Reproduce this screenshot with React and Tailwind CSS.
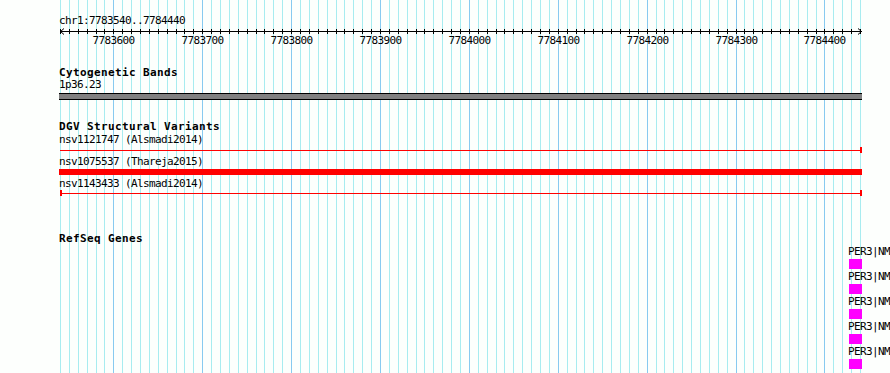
import React from 'react';

const START = 7783540;
const END = 7784440;
const X0 = 60;
const X1 = 860;
const pxPerBp = (X1 - X0) / (END - START);

// one grid line every 10 bp, darker every 100 bp
const gridLines = Array.from({ length: 91 }, (_, k) => {
  const bp = START + k * 10;
  return { x: Math.round(X0 + k * 10 * pxPerBp), major: bp % 100 === 0, bp };
});

const mono = "font-['DejaVu_Sans_Mono','Liberation_Mono',monospace]";

function Grid() {
  return (
    <svg className="absolute inset-0" width="890" height="373" shapeRendering="crispEdges">
      {gridLines.map((g) => (
        <line
          key={g.bp}
          x1={g.x + 0.5}
          x2={g.x + 0.5}
          y1="0"
          y2="373"
          stroke={g.major ? '#88caf0' : '#a8ecf0'}
          strokeWidth="1"
        />
      ))}
    </svg>
  );
}

function Ruler() {
  return (
    <svg className="block" width="890" height="19">
      <g shapeRendering="crispEdges" stroke="#000" strokeWidth="1">
        <line x1={X0} x2={X1 + 2} y1="4.5" y2="4.5" />
        {gridLines.map((g) => (
          <line key={g.bp} x1={g.x + 0.5} x2={g.x + 0.5} y1="2" y2="7" />
        ))}
      </g>
      <polyline points={`${X0 + 4},1.5 ${X0 + 0.5},4.5 ${X0 + 4},7.5`} fill="none" stroke="#000" strokeWidth="1" />
      <polyline points={`${X1 - 2},1.5 ${X1 + 1.5},4.5 ${X1 - 2},7.5`} fill="none" stroke="#000" strokeWidth="1" />
      {gridLines
        .filter((g) => g.major)
        .map((g) => (
          <text
            key={g.bp}
            x={g.x + 0.5}
            y="17"
            textAnchor="middle"
            fontFamily="DejaVu Sans Mono, Liberation Mono, monospace"
            fontSize="11"
            letterSpacing="-0.62"
            fill="#000"
          >
            {g.bp}
          </text>
        ))}
    </svg>
  );
}

function Label({ children, className = '' }) {
  return (
    <div className={`h-[12px] ml-[59px] text-[11px] leading-[12px] tracking-[-0.62px] text-black whitespace-nowrap ${className}`}>
      {children}
    </div>
  );
}

function Title({ children, className = '' }) {
  return (
    <div className={`h-[12px] ml-[59px] text-[11px] leading-[12px] tracking-[0.38px] font-bold text-black whitespace-nowrap ${className}`}>
      {children}
    </div>
  );
}

// thin span with end caps
function SpanLine({ leftCap, className = '' }) {
  return (
    <div className={`flex items-center h-[6px] ml-[60px] w-[802px] ${className}`}>
      {leftCap && <div className="w-[2px] h-[6px] bg-[#ff0000]" />}
      <div className="flex-1 h-[1px] bg-[#ff0000]" />
      <div className="w-[2px] h-[6px] bg-[#ff0000]" />
    </div>
  );
}

export default function App() {
  const genes = [0, 1, 2, 3, 4];

  return (
    <div className={`relative w-[890px] h-[373px] overflow-hidden bg-[#fdfffd] ${mono}`}>
      <Grid />

      <div className="relative flex flex-col">
        <Label className="mt-[15px]">chr1:7783540..7784440</Label>
        <Ruler />

        {/* Cytogenetic Bands */}
        <Title className="mt-[21px]">Cytogenetic Bands</Title>
        <Label>1p36.23</Label>
        <div className="mt-[2px] ml-[59px] w-[803px] h-[7px] border-y border-black bg-[#808080]" />

        {/* DGV Structural Variants */}
        <Title className="mt-[21px]">DGV Structural Variants</Title>
        <Label className="mt-[1px]">nsv1121747 (Alsmadi2014)</Label>
        <SpanLine className="mt-[1px]" />
        <Label className="mt-[3px]">nsv1075537 (Thareja2015)</Label>
        <div className="mt-[1px] ml-[59px] w-[803px] h-[6px] bg-[#ff0000]" />
        <Label className="mt-[3px]">nsv1143433 (Alsmadi2014)</Label>
        <SpanLine leftCap className="mt-[0px]" />

        {/* RefSeq Genes */}
        <Title className="mt-[37px]">RefSeq Genes</Title>
        <div className="flex flex-col ml-[789px]">
          {genes.map((i) => (
            <div key={i} className="flex flex-col mt-[1px]">
              <Label className="mt-[0px]">PER3|NM</Label>
              <div className="mt-[1px] ml-[60px] w-[13px] h-[10px] bg-[#ff00ff]" />
              <div className="h-[1px]" />
            </div>
          ))}
        </div>
      </div>
    </div>
  );
}
